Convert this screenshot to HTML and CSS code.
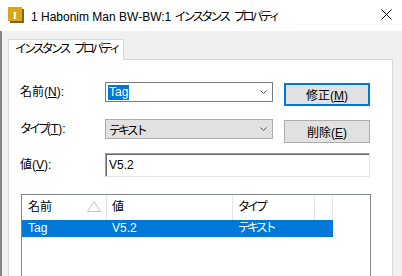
FILE: index.html
```html
<!DOCTYPE html>
<html lang="ja">
<head>
    <meta charset="UTF-8">
    <title>インスタンス プロパティ</title>
    <link rel="stylesheet" href="styles.css">
</head>
<body>
    <div class="titlebar">
        <svg class="app-icon" width="16" height="16" viewBox="0 0 16 16">
            <rect x="2" y="2" width="14" height="14" fill="#7b6420"/>
            <rect x="0" y="0" width="14" height="14" fill="#d9a514"/>
            <text x="7" y="11.5" text-anchor="middle" font-family="Liberation Serif" font-weight="bold" font-size="11" fill="#fff">I</text>
        </svg>
        <span class="title">1 Habonim Man BW-BW:1 <span class="kana">インスタンス プロパティ</span></span>
        <svg class="close" width="11" height="11" viewBox="0 0 11 11">
            <path d="M0.5 0.5 L10.5 10.5 M10.5 0.5 L0.5 10.5" stroke="#000" stroke-width="1" fill="none"/>
        </svg>
    </div>

    <div class="client">
        <div class="tab"><span class="kana">インスタンス プロパティ</span></div>
        <div class="panel">
            <div class="row">
                <label>名前(<u>N</u>):</label>
                <div class="combo">
                    <span class="sel">Tag</span>
                    <svg class="chev" width="7" height="4" viewBox="0 0 7 4"><path d="M0.5 0.5 L3.5 3.5 L6.5 0.5" stroke="#555" fill="none"/></svg>
                </div>
                <button class="btn focus">修正(<u>M</u>)</button>
            </div>
            <div class="row row-type">
                <label><span class="kana">タイプ</span>(<u>T</u>):</label>
                <div class="combo combo-off">
                    <span class="txt kana">テキスト</span>
                    <svg class="chev" width="7" height="4" viewBox="0 0 7 4"><path d="M0.5 0.5 L3.5 3.5 L6.5 0.5" stroke="#555" fill="none"/></svg>
                </div>
                <button class="btn">削除(<u>E</u>)</button>
            </div>
            <div class="row row-value">
                <label>値(<u>V</u>):</label>
                <div class="edit">V5.2</div>
            </div>

            <div class="list">
                <div class="list-head">
                    <div class="cell c1">名前
                        <svg class="sort" width="14" height="11" viewBox="0 0 14 11"><path d="M7 0.5 L13.5 10.5 L0.5 10.5 Z" stroke="#c4c4c4" fill="#fff"/></svg>
                    </div>
                    <div class="cell c2">値</div>
                    <div class="cell c3"><span class="kana">タイプ</span></div>
                    <div class="cell c4"></div>
                </div>
                <div class="list-row selected">
                    <div class="cell c1">Tag</div>
                    <div class="cell c2">V5.2</div>
                    <div class="cell c3"><span class="kana">テキスト</span></div>
                    <div class="cell c4"></div>
                </div>
            </div>
        </div>
    </div>
</body>
</html>
```

FILE: styles.css
```css
body {
    margin: 0;
    width: 402px;
    height: 276px;
    overflow: hidden;
    background: #fff;
    font-family: "Liberation Sans", "Noto Sans CJK JP", sans-serif;
    font-size: 12px;
    color: #000;
}

/* katakana in the reference is narrow, like MS UI Gothic */
.kana {
    letter-spacing: -3px;
    word-spacing: 5px;
    white-space: nowrap;
}

.titlebar {
    height: 31px;
    display: flex;
    align-items: center;
    padding-left: 8px;
    background: #fff;
}
.app-icon {
    display: block;
    margin-top: -1px;
}
.title {
    margin-left: 7px;
    font-size: 12px;
    white-space: nowrap;
}
.close {
    margin-left: auto;
    margin-right: 10px;
    margin-top: -2px;
}

.client {
    height: 245px;
    box-sizing: border-box;
    background: #f0f0f0;
    border-left: 2px solid #858585;
    padding: 8px 9px 0 6px;
}
.tab {
    position: relative;
    z-index: 1;
    width: 116px;
    height: 21px;
    box-sizing: border-box;
    border: 1px solid #d9d9d9;
    border-bottom: none;
    background: #fff;
    padding-left: 6px;
    line-height: 19px;
    margin-bottom: -1px;
    white-space: nowrap;
}
.panel {
    height: 300px;
    border: 1px solid #d9d9d9;
    background: #fff;
    padding: 22px 0 0 11px;
}

.row {
    display: flex;
    align-items: flex-start;
}
.row label {
    width: 85px;
    line-height: 20px;
    flex: none;
}
.row-type {
    margin-top: 13px;
}
.row-value {
    margin-top: 10px;
}
.row-value label {
    padding-top: 2px;
}

.combo {
    width: 168px;
    height: 20px;
    box-sizing: border-box;
    border: 1px solid #7a7a7a;
    background: #fff;
    display: flex;
    align-items: center;
    padding: 0 5px 0 2px;
    flex: none;
}
.combo .sel {
    background: #0078d7;
    color: #fff;
    height: 15px;
    line-height: 15px;
    padding: 0 1px;
}
.combo .txt {
    padding-left: 1px;
}
.combo .chev {
    margin-left: auto;
}
.combo-off {
    border-color: #adadad;
    background: #e1e1e1;
}

.btn {
    margin-left: 11px;
    margin-top: 1px;
    width: 86px;
    height: 23px;
    box-sizing: border-box;
    border: 1px solid #adadad;
    background: #e1e1e1;
    font: inherit;
    color: #000;
    padding: 0;
}
.btn.focus {
    border: 2px solid #0078d7;
}

.edit {
    width: 265px;
    height: 24px;
    box-sizing: border-box;
    border: 1px solid;
    border-color: #a0a0a0 #e3e3e3 #e3e3e3 #a0a0a0;
    box-shadow: inset 1px 1px 0 #696969;
    padding: 2px 0 0 3px;
    line-height: 18px;
}

.list {
    margin-top: 17px;
    margin-left: 1px;
    width: 350px;
    height: 120px;
    box-sizing: border-box;
    border: 1px solid #828790;
    background: #fff;
}
.list-head,
.list-row {
    display: flex;
    width: 311px;
}
.list-head {
    height: 25px;
    line-height: 25px;
}
.list-row {
    height: 17px;
    line-height: 17px;
}
.list-row.selected {
    background: #0078d7;
    color: #fff;
}
.cell {
    box-sizing: border-box;
    padding-left: 6px;
    flex: none;
}
.list-head .cell {
    border-right: 1px solid #e5e5e5;
}
.list-row .cell {
    border-right: 1px solid transparent;
}
.c1 {
    width: 85px;
    display: flex;
    align-items: center;
    justify-content: space-between;
    padding-right: 5px;
}
.c2 {
    width: 126px;
    padding-left: 5px;
}
.c3 {
    width: 82px;
    padding-left: 5px;
}
.c4 {
    width: 18px;
}
.sort {
    display: block;
    margin-top: -2px;
}
```
